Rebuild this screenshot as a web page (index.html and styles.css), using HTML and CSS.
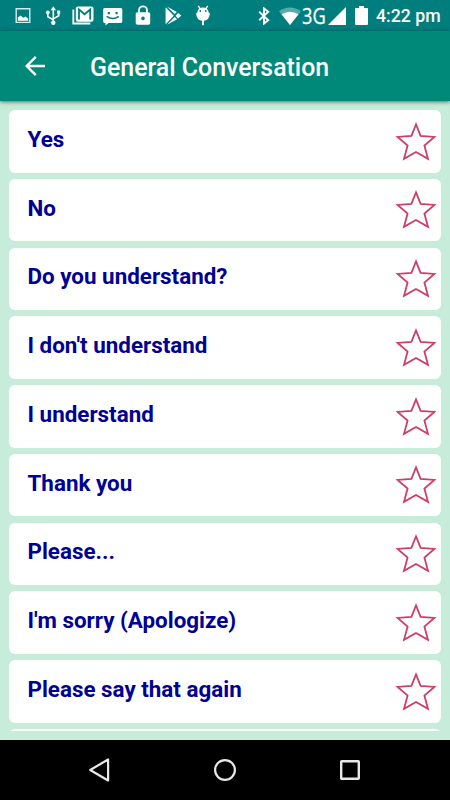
FILE: index.html
```html
<!DOCTYPE html>
<html lang="en">
<head>
    <meta charset="UTF-8">
    <meta name="viewport" content="width=device-width, initial-scale=1.0">
    <title>General Conversation</title>
    <link rel="stylesheet" href="styles.css">
</head>
<body>
    <!-- star shape shared by all the rows -->
    <svg class="defs" width="0" height="0">
      <symbol id="star" viewBox="0 0 42 42">
        <path d="M21 4.4 L25.6 15.8 L39.4 16.9 L29.4 25.6 L33 38.8 L21 32 L9 38.8 L12.6 25.6 L2.6 16.9 L16.4 15.8 Z" fill="none" stroke="#cb4068" stroke-width="1.8"/>
      </symbol>
    </svg>

    <div class="status-bar">
      <div class="notifications">
        <svg class="icon" viewBox="0 0 24 24">
          <path d="M5.2 4.8h13.6v13.6H5.2z" fill="none" stroke="#d5eaea" stroke-width="1.4"/>
          <path d="M6.8 16.8v-3.3l2.7-2 3 2.3 2-1.2 2.7 2v2.2z" fill="#fff"/>
        </svg>
        <svg class="icon" viewBox="0 0 24 24">
          <path d="M12.3 5v14M6.8 8.5v4.2l5.5 3.2M17.7 8.5v3.2l-5.4 3.2" fill="none" stroke="#fff" stroke-width="1.6"/>
          <path d="M12.3 2.2l2.7 4H9.6zM16 6.5h3.2v3.2H16z" fill="#fff"/>
          <circle cx="6.8" cy="8.5" r="1.9" fill="#fff"/>
          <circle cx="12.3" cy="18.7" r="2.2" fill="#fff"/>
        </svg>
        <svg class="icon" viewBox="0 0 24 24">
          <path d="M2.3 5.5v14h17" fill="none" stroke="#fff" stroke-width="1.8"/>
          <rect x="4.8" y="2.5" width="17.7" height="15.2" rx="2" fill="#fff"/>
          <path d="M8 15.5V5.5l5.6 4.8 5.6-4.8v10" fill="none" stroke="#007d7d" stroke-width="1.8"/>
        </svg>
        <svg class="icon" viewBox="0 0 24 24">
          <path d="M3.2 4h16.5q1.6 0 1.6 1.6v11.7q0 1.6-1.6 1.6H7.5L4.5 21.5V18.9H3.2q-1 0-1-1.6V5.6Q2.2 4 3.2 4z" fill="#fff"/>
          <path d="M6.7 8h2.2v2.2H6.7zM14.5 8h2.2v2.2h-2.2z" fill="#007d7d"/>
          <path d="M5.6 12.3q6.1 4.6 12.2 0" fill="none" stroke="#007d7d" stroke-width="1.5"/>
        </svg>
        <svg class="icon" viewBox="0 0 24 24">
          <path d="M8 9V6.3a4 4 0 0 1 8 0V9" fill="none" stroke="#fff" stroke-width="1.8"/>
          <rect x="4.7" y="8.3" width="14.5" height="12.5" rx="1.8" fill="#fff"/>
          <circle cx="12" cy="14.4" r="1.8" fill="#007d7d"/>
        </svg>
        <svg class="icon" viewBox="0 0 24 24">
          <path d="M4.6 3.2v17l8.2-8.4zM6 2.5l7.6 7.6 2.2-2.1zM6 20.7l7.7-7.6 2.4 2.2zM14.6 11.7l2.4-2.8 3.4 2.7-3.4 3z" fill="#fff"/>
        </svg>
        <svg class="icon" viewBox="0 0 24 24">
          <path d="M7.3 1.8l2.7 4.4M16.7 1.8L14 6.2" stroke="#fff" stroke-width="1.4"/>
          <path d="M6.3 8.5Q7 3.5 12 3.5t5.7 5l1.3 1-.8 3Q17 16.7 12 16.7t-6.2-4.2l-.8-3z" fill="#fff"/>
          <path d="M12 15v6.3" stroke="#fff" stroke-width="1.8"/>
          <circle cx="9.3" cy="7" r=".9" fill="#007d7d"/>
          <circle cx="14.7" cy="7" r=".9" fill="#007d7d"/>
        </svg>
      </div>
      <div class="system">
        <svg class="bluetooth" viewBox="0 0 12 18">
          <path d="M1.2 4.8l9 8.4L6 16.6V1.4l4.2 3.4-9 8.4" fill="none" stroke="#fff" stroke-width="1.9"/>
        </svg>
        <svg class="wifi" viewBox="0 0 22 18">
          <path d="M0 4.3Q11-3.2 22 4.3L11 18z" fill="#fff" opacity=".35"/>
          <path d="M2.5 7.3Q11 2.1 19.5 7.3L11 18z" fill="#fff"/>
        </svg>
        <span class="network"><span class="network-text">3G</span></span>
        <svg class="signal" viewBox="0 0 18 18">
          <path d="M18 0v18H0z" fill="#fff"/>
        </svg>
        <svg class="battery" viewBox="0 0 13 19">
          <path d="M4 0h5v2h3q1 0 1 1v15q0 1-1 1H1q-1 0-1-1V3q0-1 1-1h3z" fill="#fff"/>
        </svg>
        <span class="time">4:22 pm</span>
      </div>
    </div>

    <div class="header">
      <svg class="back" viewBox="0 0 20 20">
        <path d="M20 10H1.8M10.8 .9L1.7 10l9.1 9.1" fill="none" stroke="#fff" stroke-width="2.4"/>
      </svg>
      <h1 class="title">General Conversation</h1>
    </div>

    <div class="list">
      <div class="row">
        <span class="phrase">Yes</span>
        <svg class="star"><use href="#star"/></svg>
      </div>
      <div class="row">
        <span class="phrase">No</span>
        <svg class="star"><use href="#star"/></svg>
      </div>
      <div class="row">
        <span class="phrase">Do you understand?</span>
        <svg class="star"><use href="#star"/></svg>
      </div>
      <div class="row">
        <span class="phrase">I don't understand</span>
        <svg class="star"><use href="#star"/></svg>
      </div>
      <div class="row">
        <span class="phrase">I understand</span>
        <svg class="star"><use href="#star"/></svg>
      </div>
      <div class="row">
        <span class="phrase">Thank you</span>
        <svg class="star"><use href="#star"/></svg>
      </div>
      <div class="row">
        <span class="phrase">Please...</span>
        <svg class="star"><use href="#star"/></svg>
      </div>
      <div class="row">
        <span class="phrase">I'm sorry (Apologize)</span>
        <svg class="star"><use href="#star"/></svg>
      </div>
      <div class="row">
        <span class="phrase">Please say that again</span>
        <svg class="star"><use href="#star"/></svg>
      </div>
      <!-- next row, cut off by the bottom of the list -->
      <div class="row"></div>
    </div>

    <div class="nav-bar">
      <svg class="nav-icon" viewBox="0 0 24 24">
        <path d="M20.1 1.5v21L2.2 12z" fill="none" stroke="#e8e8e8" stroke-width="2.2" stroke-linejoin="round"/>
      </svg>
      <svg class="nav-icon" viewBox="0 0 24 24">
        <circle cx="12" cy="12" r="9.9" fill="none" stroke="#e8e8e8" stroke-width="2.2"/>
      </svg>
      <svg class="nav-icon" viewBox="0 0 24 24">
        <rect x="3.2" y="3.2" width="17.6" height="17.6" rx=".5" fill="none" stroke="#e8e8e8" stroke-width="2.4"/>
      </svg>
    </div>
</body>
</html>
```
FILE: styles.css
```css
* {
    box-sizing: border-box;
}

body {
    margin: 0;
    height: 800px;
    display: flex;
    flex-flow: column nowrap;
    overflow: hidden;
    font-family: Roboto, sans-serif;
    background-color: #c8ecda;
}

svg {
    display: block;
    flex: none;
}

.defs {
    position: absolute;
}

.status-bar {
    flex: none;
    display: flex;
    justify-content: space-between;
    height: 31px;
    padding: 0 10px 0 10.5px;
    background-color: #007d7d;
}

.notifications {
    display: flex;
    gap: 6px;
    padding-top: 4px;
}

.icon {
    width: 24px;
    height: 24px;
}

.system {
    display: flex;
    align-items: center;
    color: #fff;
}

.bluetooth {
    width: 12px;
    height: 18px;
    margin-right: 9px;
}

.wifi {
    width: 22px;
    height: 18px;
}

.network {
    width: 27px;
    height: 31px;
    padding-left: 1px;
    font-family: "Open Sans", sans-serif;
    font-size: 22px;
    line-height: 30px;
}

.network-text {
    display: inline-block;
    transform: scaleX(0.83);
    transform-origin: left;
    -webkit-text-stroke: 0.3px #fff;
}

.signal {
    width: 18px;
    height: 18px;
    margin-right: 9px;
}

.battery {
    width: 13px;
    height: 19px;
    margin-right: 8px;
}

.time {
    width: 64px;
    font-size: 17.7px;
    font-weight: 500;
    line-height: 34px;
    white-space: nowrap;
}

.header {
    flex: none;
    display: flex;
    align-items: center;
    height: 70px;
    padding-left: 25px;
    background-color: #008979;
    box-shadow: 0 1px 4px rgba(0, 0, 0, 0.55);
}

.back {
    width: 20px;
    height: 20px;
}

.title {
    margin: 4px 0 0 45px;
    color: #fff;
    font-size: 24.9px;
    font-weight: 500;
    line-height: 30px;
}

.list {
    flex: none;
    display: flex;
    flex-flow: column nowrap;
    gap: 6.25px;
    height: 621px;
    margin: 9px 9px 9px;
    overflow: hidden;
}

.row {
    flex: none;
    display: flex;
    justify-content: space-between;
    height: 62.5px;
    padding: 0 4px 0 18.5px;
    border-radius: 6px;
    background-color: #fff;
}

.phrase {
    padding-top: 14.9px;
    color: #000094;
    font-size: 22.4px;
    font-weight: 700;
    line-height: 28px;
}

.star {
    width: 42px;
    height: 42px;
    margin-top: 9.7px;
}

.nav-bar {
    flex: none;
    display: flex;
    justify-content: center;
    align-items: center;
    gap: 101px;
    height: 60px;
    background-color: #000;
}

.nav-icon {
    width: 24px;
    height: 24px;
}
```
